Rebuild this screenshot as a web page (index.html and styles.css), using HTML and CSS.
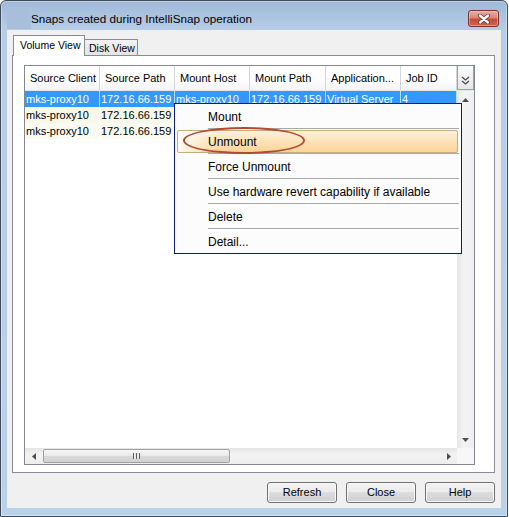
FILE: index.html
```html
<!DOCTYPE html>
<html>
<head>
    <link rel="stylesheet" href="styles.css">
</head>
<body>
    <div class="window">
        <div class="titlebar">
            <div class="app-icon"></div>
            <div class="title">Snaps created during IntelliSnap operation</div>
            <div class="close-btn">
                <svg width="12" height="10" viewBox="0 0 12 10">
                    <path d="M2 1.5 L10 8.5 M10 1.5 L2 8.5" stroke="#6d2c25" stroke-width="4" stroke-linecap="round"/>
                    <path d="M2 1.5 L10 8.5 M10 1.5 L2 8.5" stroke="#ffffff" stroke-width="2.4" stroke-linecap="round"/>
                </svg>
            </div>
        </div>

        <div class="client">
            <div class="tabs">
                <div class="tab active">Volume View</div>
                <div class="tab">Disk View</div>
            </div>

            <div class="tab-panel">
                <div class="table">
                    <div class="thead">
                        <div class="th c1">Source Client</div>
                        <div class="th c2">Source Path</div>
                        <div class="th c3">Mount Host</div>
                        <div class="th c4">Mount Path</div>
                        <div class="th c5">Application...</div>
                        <div class="th c6">Job ID</div>
                        <div class="th-corner">
                            <svg width="9" height="10" viewBox="0 0 9 10">
                                <path d="M1 1 L4.5 4 L8 1 M1 5 L4.5 8 L8 5" fill="none" stroke="#4a4a4a" stroke-width="1.3"/>
                            </svg>
                        </div>
                    </div>

                    <div class="tbody-wrap">
                        <div class="rows">
                            <div class="row selected">
                                <div class="td c1">mks-proxy10</div>
                                <div class="td c2">172.16.66.159</div>
                                <div class="td c3">mks-proxy10</div>
                                <div class="td c4">172.16.66.159</div>
                                <div class="td c5">Virtual Server</div>
                                <div class="td c6">4</div>
                            </div>
                            <!-- the other columns of these rows sit under the menu -->
                            <div class="row">
                                <div class="td c1">mks-proxy10</div>
                                <div class="td c2">172.16.66.159</div>
                                <div class="td c3"></div>
                                <div class="td c4"></div>
                                <div class="td c5"></div>
                                <div class="td c6"></div>
                            </div>
                            <div class="row alt">
                                <div class="td c1">mks-proxy10</div>
                                <div class="td c2">172.16.66.159</div>
                                <div class="td c3"></div>
                                <div class="td c4"></div>
                                <div class="td c5"></div>
                                <div class="td c6"></div>
                            </div>
                        </div>
                        <div class="vscroll">
                            <div class="arrow-box">
                                <svg width="7" height="4" viewBox="0 0 7 4"><polygon points="0,4 3.5,0 7,4" fill="#4d4d4d"/></svg>
                            </div>
                            <div class="arrow-box">
                                <svg width="7" height="4" viewBox="0 0 7 4"><polygon points="0,0 7,0 3.5,4" fill="#4d4d4d"/></svg>
                            </div>
                        </div>
                    </div>

                    <div class="hscroll-wrap">
                        <div class="hscroll">
                            <div class="arrow-box h">
                                <svg width="4" height="7" viewBox="0 0 4 7"><polygon points="4,0 4,7 0,3.5" fill="#4d4d4d"/></svg>
                            </div>
                            <div class="thumb">
                                <div class="grip"></div>
                            </div>
                            <div class="arrow-box h end">
                                <svg width="4" height="7" viewBox="0 0 4 7"><polygon points="0,0 4,3.5 0,7" fill="#4d4d4d"/></svg>
                            </div>
                        </div>
                        <div class="scroll-corner"></div>
                    </div>
                </div>
            </div>

            <div class="buttons">
                <div class="button">Refresh</div>
                <div class="button">Close</div>
                <div class="button">Help</div>
            </div>
        </div>

        <!-- right-click menu over the grid -->
        <div class="context-menu">
            <div class="menu-item">Mount</div>
            <div class="menu-sep"></div>
            <div class="menu-item active">Unmount</div>
            <div class="menu-sep"></div>
            <div class="menu-item">Force Unmount</div>
            <div class="menu-sep"></div>
            <div class="menu-item">Use hardware revert capability if available</div>
            <div class="menu-sep"></div>
            <div class="menu-item">Delete</div>
            <div class="menu-sep"></div>
            <div class="menu-item">Detail...</div>
        </div>
        <div class="callout"></div>
    </div>
</body>
</html>
```

FILE: styles.css
```css
body {
    margin: 0;
    background: #ffffff;
    font-family: "Liberation Sans", Arial, sans-serif;
    font-size: 11px;
    color: #000;
}

.window {
    position: relative;
    width: 508px;
    height: 517px;
    box-sizing: border-box;
    border: 1px solid #3e4c5c;
    border-radius: 6px 6px 0 0;
    padding: 0 6px 8px 6px;
    background: linear-gradient(#9fb9d7, #b6cde7 29px, #bad1ea);
    box-shadow: inset 0 0 0 1px rgba(255, 255, 255, 0.35);
}

/* title bar */
.titlebar {
    display: flex;
    height: 29px;
}

.app-icon {
    width: 24px;
    height: 22px;
    margin-top: 6px;
    background: #a7bfdb;
}

.title {
    padding-top: 11px;
    font-size: 11.7px;
    color: #000;
}

.close-btn {
    margin-left: auto;
    margin-top: 9px;
    margin-right: 2px;
    width: 31px;
    height: 17px;
    box-sizing: border-box;
    border: 1px solid #7a3129;
    border-radius: 3px;
    background: linear-gradient(#e9ab9d, #d98a7b 45%, #c24c3c 55%, #d0644d);
    box-shadow: inset 0 0 0 1px rgba(255, 220, 210, 0.45);
    display: flex;
    align-items: center;
    justify-content: center;
}

/* client area */
.client {
    height: 478px;
    box-sizing: border-box;
    padding: 5px 6px 5px 5px;
    background: #f0f0f0;
    display: flex;
    flex-direction: column;
}

.tabs {
    display: flex;
    align-items: flex-end;
    height: 20px;
    padding-left: 1px;
}

.tab {
    box-sizing: border-box;
    height: 16px;
    width: 53px;
    border: 1px solid #898c95;
    border-left: none;
    border-bottom: none;
    background: linear-gradient(#f2f2f2, #e4e4e4);
    padding-left: 4px;
    font-size: 10.5px;
    line-height: 16px;
    white-space: nowrap;
}

.tab.active {
    position: relative;
    z-index: 1;
    width: 72px;
    height: 21px;
    margin-bottom: -1px;
    border-left: 1px solid #898c95;
    background: #ffffff;
    padding-left: 6px;
    line-height: 19px;
}

.tab-panel {
    height: 418px;
    box-sizing: border-box;
    border: 1px solid #898c95;
    background: #ffffff;
    padding: 9px 0 0 11px;
}

/* grid */
.table {
    width: 451px;
    height: 400px;
    box-sizing: border-box;
    border: 1px solid #828790;
    display: flex;
    flex-direction: column;
    background: #ffffff;
}

.thead {
    display: flex;
    height: 25px;
    box-sizing: border-box;
    border-bottom: 1px solid #e3e4e6;
    background: linear-gradient(#ffffff, #ffffff 50%, #f3f4f6);
}

.th {
    box-sizing: border-box;
    border-right: 1px solid #d5d6d9;
    padding-left: 5px;
    line-height: 24px;
    white-space: nowrap;
    overflow: hidden;
}

.c1, .c2, .c3, .c5 { width: 75px; }
.c4 { width: 76px; }
.c6 { width: 56px; }

.th-corner {
    width: 17px;
    box-sizing: border-box;
    border: 1px solid #a0a0a0;
    border-top: none;
    background: linear-gradient(#fbfbfb, #e6e6e6);
    display: flex;
    justify-content: center;
    padding-top: 10px;
}

.tbody-wrap {
    flex: 1;
    display: flex;
}

.rows {
    width: 432px;
}

.row {
    display: flex;
    height: 16px;
    background: #f8f8ea;
}

.row.alt {
    background: #fafaf1;
}

.row.selected {
    background: #3399ff;
    color: #ffffff;
}

.td {
    box-sizing: border-box;
    border-right: 1px solid #ffffff;
    padding-left: 1px;
    line-height: 16px;
    white-space: nowrap;
    overflow: hidden;
}

.row.selected .td {
    border-right-color: #b9dcff;
}

.vscroll {
    width: 17px;
    background: linear-gradient(to right, #e6e6e6, #f4f4f4 40%, #eeeeee);
    display: flex;
    flex-direction: column;
    justify-content: space-between;
}

.arrow-box {
    width: 17px;
    height: 17px;
    display: flex;
    align-items: center;
    justify-content: center;
}

.hscroll-wrap {
    display: flex;
    height: 16px;
}

.hscroll {
    width: 432px;
    display: flex;
    align-items: center;
    background: linear-gradient(#e5e5e5, #f3f3f3 40%, #eeeeee);
}

.arrow-box.h {
    height: 16px;
}

.arrow-box.end {
    margin-left: auto;
}

.thumb {
    width: 187px;
    height: 14px;
    margin-left: 1px;
    box-sizing: border-box;
    border: 1px solid #a0a0a0;
    border-radius: 2px;
    background: linear-gradient(#f6f6f6, #e9e9e9 50%, #d9d9d9 50%, #d2d2d2);
    display: flex;
    align-items: center;
    justify-content: center;
}

.grip {
    width: 7px;
    height: 6px;
    background: repeating-linear-gradient(to right, #5e5e5e 0 1px, #e8e8e8 1px 3px);
}

.scroll-corner {
    flex: 1;
    background: #f7f7f7;
}

/* dialog buttons */
.buttons {
    display: flex;
    justify-content: flex-end;
    gap: 9px;
    margin-top: 9px;
}

.button {
    width: 70px;
    height: 21px;
    box-sizing: border-box;
    border: 1px solid #707070;
    border-radius: 3px;
    background: linear-gradient(#f2f2f2, #ebebeb 50%, #dddddd 50%, #cfcfcf);
    box-shadow: inset 0 0 0 1px #fafafa;
    text-align: center;
    line-height: 19px;
}

/* context menu */
.context-menu {
    position: absolute;
    left: 173px;
    top: 102px;
    width: 288px;
    box-sizing: border-box;
    border: 1px solid #0a1a80;
    background: #fcfcfc;
    font-size: 12px;
    z-index: 5;
}

.menu-item {
    height: 24px;
    box-sizing: border-box;
    padding: 2px 0 0 33px;
    line-height: 22px;
    white-space: nowrap;
}

.menu-item.active {
    height: 23px;
    margin: 1px 3px 0 2px;
    border: 1px solid #c8aa80;
    border-radius: 2px;
    padding: 1px 0 0 30px;
    line-height: 20px;
    background:
        linear-gradient(to right, rgba(255, 255, 255, 0.85), rgba(255, 255, 255, 0) 14%),
        linear-gradient(#fef0da, #fde2b8 50%, #fdd496);
}

.menu-sep {
    height: 1px;
    margin: 0 2px 0 33px;
    background: #a9a9a9;
}

/* hand-drawn ring around the Unmount entry */
.callout {
    position: absolute;
    left: 182px;
    top: 126px;
    width: 122px;
    height: 27px;
    box-sizing: border-box;
    border: 2px solid #b24a32;
    border-radius: 50%;
    z-index: 6;
}
```
